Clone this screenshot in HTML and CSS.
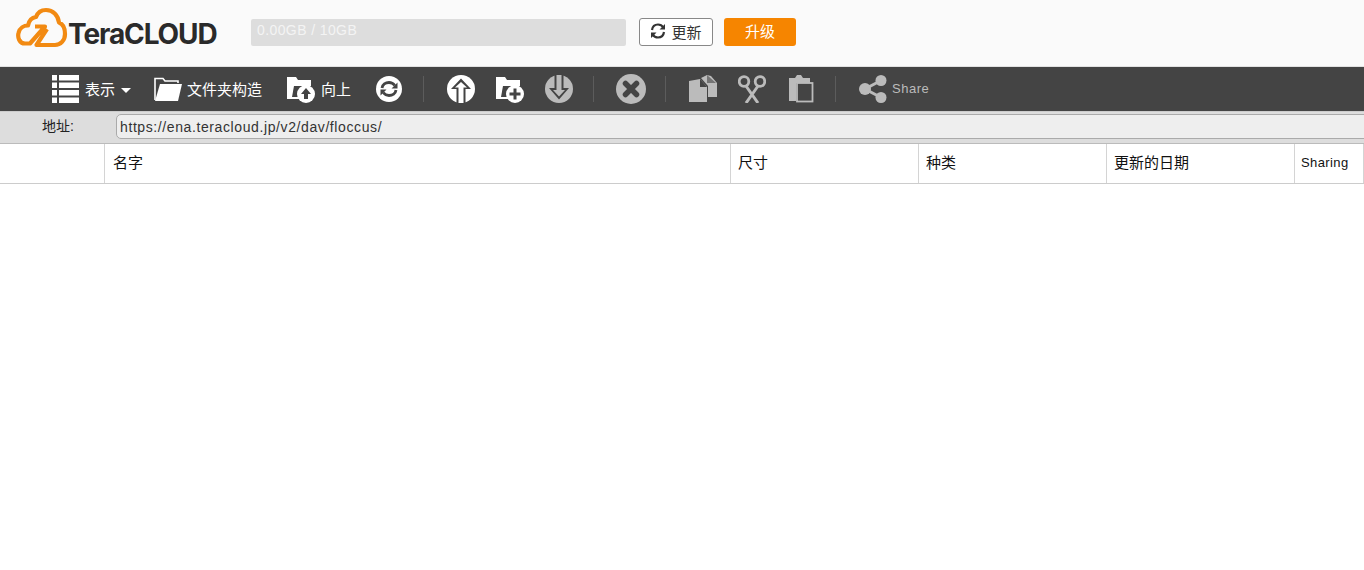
FILE: index.html
```html
<!DOCTYPE html>
<html lang="zh">
<head>
  <meta charset="UTF-8" />
  <title>TeraCLOUD</title>
  <link rel="stylesheet" href="styles.css">
</head>
<body>

  <header class="top-bar">
    <div class="logo">
      <svg class="logo-mark" width="52" height="42" viewBox="16 7 52 42" fill="none" stroke="#f28a12" stroke-width="4.200" stroke-linecap="butt" stroke-linejoin="round">
        <path d="M35 26.500H45L30 43.500H25C19 43.500 17.500 37 18.500 33C19.500 28 24 25.500 28 25.500C29 20.500 32 17.500 36 17C38 11.500 42 10 46 10C53 10 58 15 59 22.500C63 24 65 29 65 34C65 40.500 60.500 45 55 45H36.500L47 29"/>
      </svg>
      <span class="logo-text">TeraCLOUD</span>
    </div>
    <div class="quota">0.00GB / 10GB</div>
    <button class="refresh-btn">
      <svg width="16" height="16" viewBox="0 0 16 16" fill="none" stroke="#333" stroke-width="2.200">
        <path d="M2 7C2.500 3.500 5 1.500 8 1.500C10.500 1.500 12.300 2.800 13.500 4.500"/>
        <path d="M14 9C13.500 12.500 11 14.500 8 14.500C5.500 14.500 3.700 13.200 2.500 11.500"/>
        <path d="M15 1V6.500H9.500Z M1 15V9.500H6.500Z" fill="#333" stroke="none"/>
      </svg>
      更新
    </button>
    <button class="upgrade-btn">升级</button>
  </header>

  <nav class="toolbar">
    <div class="tool tool-view">
      <svg width="27" height="28" viewBox="0 0 27 28" fill="#fff">
        <path d="M0 0H5V5.500H0ZM7 0H27V5.500H7ZM0 7.500H5V13H0ZM7 7.500H27V13H7ZM0 15H5V20.500H0ZM7 15H27V20.500H7ZM0 22.500H5V28H0ZM7 22.500H27V28H7Z"/>
      </svg>
      <span>表示</span>
      <i class="caret"></i>
    </div>
    <div class="tool tool-tree">
      <svg width="28" height="26" viewBox="0 0 28 26" fill="#fff">
        <path d="M1 24V2.500H9L11 5H24V7" fill="none" stroke="#fff" stroke-width="1.600"/>
        <path d="M6 8H28L24 25H1Z"/>
      </svg>
      <span>文件夹构造</span>
    </div>
    <div class="tool tool-up">
      <svg width="28" height="28" viewBox="0 0 28 28">
        <path d="M0 2H9L11 5H24V14H18V24H0Z" fill="#fff"/>
        <path d="M5 22L7 11H24V13L17 22Z" fill="#444"/>
        <circle cx="19" cy="19" r="9" fill="#fff"/>
        <path d="M19 13L24 19H21V24H17V19H14Z" fill="#444"/>
      </svg>
      <span>向上</span>
    </div>
    <div class="tool tool-sync">
      <svg width="26" height="26" viewBox="0 0 26 26">
        <circle cx="13" cy="13" r="13" fill="#fff"/>
        <g fill="none" stroke="#444" stroke-width="2.800">
          <path d="M6 12C6.500 8.500 9.500 6.500 13 6.500C15.500 6.500 17.500 7.800 18.800 9.500"/>
          <path d="M20 14C19.500 17.500 16.500 19.500 13 19.500C10.500 19.500 8.500 18.200 7.200 16.500"/>
        </g>
        <path d="M21.500 6.500V12.500H15.500Z M4.500 19.500V13.500H10.500Z" fill="#444"/>
      </svg>
    </div>
    <i class="sep sep-a"></i>
    <div class="tool tool-upload">
      <svg width="28" height="28" viewBox="0 0 28 28">
        <circle cx="14" cy="14" r="14" fill="#fff"/>
        <path d="M14 3.500L24 14H18.500V28H9.500V14H4Z" fill="#444"/>
        <path d="M14 7L20 12.500H16.500V28H11.500V12.500H8Z" fill="#fff"/>
      </svg>
    </div>
    <div class="tool tool-newfolder">
      <svg width="28" height="28" viewBox="0 0 28 28">
        <path d="M0 2H9L11 5H24V14H18V24H0Z" fill="#fff"/>
        <path d="M5 22L7 11H24V13L17 22Z" fill="#444"/>
        <circle cx="19" cy="19" r="9" fill="#fff"/>
        <path d="M17.500 13.500H20.500V17.500H24.500V20.500H20.500V24.500H17.500V20.500H13.500V17.500H17.500Z" fill="#444"/>
      </svg>
    </div>
    <div class="tool tool-download">
      <svg width="28" height="28" viewBox="0 0 28 28">
        <circle cx="14" cy="14" r="14" fill="#bbb"/>
        <path d="M9.500 0H18.500V13H24L14 24.500L4 13H9.500Z" fill="#444"/>
        <path d="M11.500 0H16.500V15H20L14 21.500L8 15H11.500Z" fill="#bbb"/>
      </svg>
    </div>
    <i class="sep sep-b"></i>
    <div class="tool tool-delete">
      <svg width="30" height="30" viewBox="0 0 30 30">
        <circle cx="15" cy="15" r="15" fill="#bbb"/>
        <path d="M9.500 9.500L20.500 20.500M20.500 9.500L9.500 20.500" stroke="#444" stroke-width="5.500" stroke-linecap="round"/>
      </svg>
    </div>
    <i class="sep sep-c"></i>
    <div class="tool tool-copy">
      <svg width="28" height="28" viewBox="0 0 28 28" fill="#bbb">
        <path d="M0 6L11 4L18 12V27H0Z"/>
        <path d="M11 4V12H18Z" fill="#444"/>
        <path d="M12 3L18 0L22 1L28 8V22H19V11Z"/>
        <path d="M18 0V8H27Z" fill="#444" opacity="0.600"/>
      </svg>
    </div>
    <div class="tool tool-cut">
      <svg width="28" height="28" viewBox="0 0 28 28" fill="none" stroke="#bbb">
        <circle cx="6" cy="6.500" r="4.800" stroke-width="2.800"/>
        <circle cx="22" cy="6.500" r="4.800" stroke-width="2.800"/>
        <path d="M8 11L20 28M20 11L8 28" stroke-width="3"/>
      </svg>
    </div>
    <div class="tool tool-paste">
      <svg width="26" height="28" viewBox="0 0 26 28">
        <path d="M1 3H7L9 0H13L15 3H22V8H8V26H1Z" fill="#bbb"/>
        <rect x="9" y="8" width="15.500" height="18.500" fill="#444" stroke="#bbb" stroke-width="1.800"/>
      </svg>
    </div>
    <i class="sep sep-d"></i>
    <div class="tool tool-share">
      <svg width="28" height="28" viewBox="0 0 28 28">
        <path d="M22 5.500L6 14L22 22.500" fill="none" stroke="#bbb" stroke-width="3"/>
        <circle cx="22" cy="5.500" r="5.500" fill="#bbb"/>
        <circle cx="6" cy="14" r="6" fill="#bbb"/>
        <circle cx="22" cy="22.500" r="5.500" fill="#bbb"/>
      </svg>
      <span>Share</span>
    </div>
  </nav>

  <div class="address-bar">
    <label class="address-label">地址:</label>
    <div class="address-input">https://ena.teracloud.jp/v2/dav/floccus/</div>
  </div>

  <div class="file-head">
    <div class="col"></div>
    <div class="col">名字</div>
    <div class="col">尺寸</div>
    <div class="col">种类</div>
    <div class="col">更新的日期</div>
    <div class="col col-share">Sharing</div>
  </div>

</body>
</html>
```

FILE: styles.css
```css
* { box-sizing: border-box; margin: 0; padding: 0; font-family: "Liberation Sans", "Noto Sans CJK JP", sans-serif; }
body { background: #fff; height: 570px; overflow: hidden; }

.top-bar {
  height: 67px;
  background: #fafafa;
  border-bottom: 1px solid #e2e2e2;
  display: flex;
  align-items: flex-start;
  padding-left: 16px;
}

.logo { display: flex; align-items: flex-start; width: 235px; padding-top: 7px; }
.logo-mark { flex: none; }
.logo-text {
  margin-top: 9px;
  font-family: "Inter", sans-serif;
  font-size: 28px;
  line-height: 36px;
  font-weight: 700;
  letter-spacing: -1.100px;
  color: #2a2a2a;
}

.quota {
  width: 375px;
  height: 27px;
  margin-top: 19px;
  padding-left: 6px;
  background: #ddd;
  border-radius: 2px;
  color: #f4f4f4;
  font-size: 14px;
  letter-spacing: 0.400px;
  line-height: 23px;
}

.refresh-btn {
  width: 74px;
  height: 28px;
  margin: 18px 0 0 13px;
  padding-bottom: 2px;
  display: flex;
  align-items: center;
  justify-content: center;
  gap: 5px;
  background: #fff;
  border: 1px solid #888;
  border-radius: 3px;
  color: #333;
  font-size: 15px;
}

.upgrade-btn {
  width: 72px;
  height: 28px;
  margin: 18px 0 0 11px;
  padding-bottom: 3px;
  background: #f68500;
  border: none;
  border-radius: 3px;
  color: #fff;
  font-size: 15px;
}

.toolbar {
  height: 44px;
  background: #444;
  display: flex;
  align-items: center;
  padding-left: 52px;
  color: #fff;
  font-size: 15px;
}

.tool { display: flex; align-items: center; gap: 6px; flex: none; }
.tool svg { display: block; flex: none; }
.tool span { padding-bottom: 1px; }
.tool-tree { margin-left: 23px; gap: 5px; }
.tool-up { margin-left: 25px; }
.tool-sync { margin-left: 25px; }
.tool-upload { margin-left: 23px; }
.tool-newfolder, .tool-download { margin-left: 21px; }
.tool-delete { margin-left: 22px; }
.tool-copy { margin-left: 23px; }
.tool-cut { margin-left: 21px; }
.tool-paste { margin-left: 22px; }
.tool-share { color: #bbb; font-size: 13px; margin-left: 23px; gap: 5px; letter-spacing: 0.500px; }

.caret {
  margin-top: 2px;
  border-left: 5px solid transparent;
  border-right: 5px solid transparent;
  border-top: 5px solid #fff;
}

.sep { width: 1px; height: 26px; background: #5c5c5c; flex: none; }
.sep-a { margin-left: 21px; }
.sep-b { margin-left: 20px; }
.sep-c { margin-left: 19px; }
.sep-d { margin-left: 21px; }

.address-bar {
  height: 33px;
  background: #ddd;
  border-top: 1px solid #ccc;
  border-bottom: 1px solid #bbb;
  display: flex;
  align-items: flex-start;
  padding: 2px 0 0 42px;
  font-size: 14px;
  color: #222;
}

.address-label { width: 74px; flex: none; line-height: 25px; }
.address-input {
  flex: 1;
  height: 25px;
  margin-right: -10px;
  padding-left: 3px;
  background: #eee;
  border: 1px solid #aaa;
  border-radius: 5px;
  font-size: 14px;
  line-height: 24px;
  letter-spacing: 0.600px;
  color: #333;
}

.file-head {
  height: 40px;
  display: grid;
  grid-template-columns: 105px 626px 188px 188px 188px 69px;
  background: #fff;
  border-bottom: 1px solid #ccc;
  font-size: 15px;
  color: #111;
}

.col { border-right: 1px solid #d4d4d4; padding-left: 7px; line-height: 37px; }
.col:nth-child(2) { padding-left: 8px; }
.col-share { padding-left: 6px; font-size: 13px; letter-spacing: 0.400px; }
```
